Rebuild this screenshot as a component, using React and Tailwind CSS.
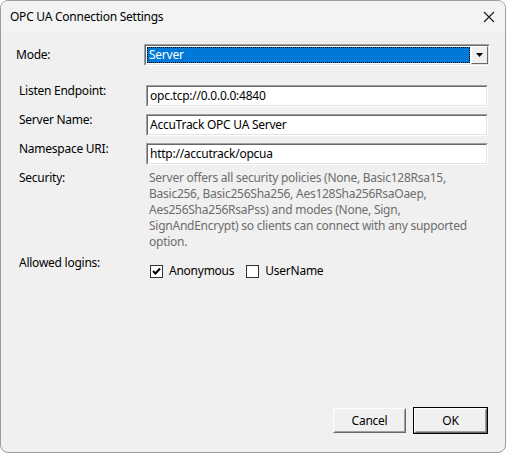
import React from 'react';

const Field = ({ value }) => (
  <div className="flex-1 h-[22px] border border-t-[#a0a0a0] border-l-[#a0a0a0] border-b-white border-r-white">
    <div className="h-full border border-t-[#696969] border-l-[#696969] border-b-[#e3e3e3] border-r-[#e3e3e3] bg-white px-[2px] flex items-center text-black">
      {value}
    </div>
  </div>
);

const Check = ({ checked, label }) => (
  <label className="flex items-center">
    <span className="w-[13px] h-[13px] border border-[#333333] bg-white flex items-center justify-center">
      {checked && (
        <svg width="9" height="9" viewBox="0 0 9 9">
          <polyline points="1,4 3.5,6.5 8,1.5" fill="none" stroke="#000" strokeWidth="2" />
        </svg>
      )}
    </span>
    <span className="ml-[6px]">{label}</span>
  </label>
);

const WinButton = ({ children, isDefault }) => (
  <div className={`w-[75px] h-[27px] ${isDefault ? 'border border-black' : 'border border-transparent'}`}>
    <div className="h-full border border-t-white border-l-white border-b-[#696969] border-r-[#696969] bg-[#f0f0f0]">
      <div className="h-full flex items-center justify-center border border-t-[#f0f0f0] border-l-[#f0f0f0] border-b-[#a0a0a0] border-r-[#a0a0a0]">
        {children}
      </div>
    </div>
  </div>
);

export default function App() {
  return (
    <div className="w-[506px] h-[453px] bg-[#f0f0f0] border border-[#9c9c9c] rounded-[8px] overflow-hidden flex flex-col text-[12px] leading-[16px] tracking-[-0.25px] text-black font-['Noto_Sans',sans-serif]">
      {/* Title bar */}
      <div className="h-[31px] shrink-0 bg-[#f3f3f3] flex items-center justify-between pl-[9px] pr-[10px]">
        <span>OPC UA Connection Settings</span>
        <svg width="12" height="12" viewBox="0 0 12 12">
          <path d="M1 1 L11 11 M11 1 L1 11" stroke="#1a1a1a" strokeWidth="1.1" />
        </svg>
      </div>

      <div className="flex-1 flex flex-col pl-[18px] pr-[17px] pt-[12px] pb-[18px]">
        {/* Mode */}
        <div className="flex items-center h-[22px]">
          <span className="w-[127px] -ml-[3px]">Mode:</span>
          <div className="flex-1 -mr-[2px] ml-[1px] h-[22px] border border-t-[#a0a0a0] border-l-[#a0a0a0] border-b-white border-r-white">
            <div className="h-full flex border border-t-[#696969] border-l-[#696969] border-b-[#e3e3e3] border-r-[#e3e3e3] bg-white">
              <div className="flex-1 m-[1px] bg-[#0078d7] border border-dotted border-[#000] text-white flex items-center pl-[1px]">
                Server
              </div>
              <div className="w-[17px] h-full border border-t-white border-l-white border-b-[#696969] border-r-[#696969] bg-[#f0f0f0] flex items-center justify-center">
                <svg width="7" height="4" viewBox="0 0 7 4">
                  <polygon points="0,0 7,0 3.5,4" fill="#000" />
                </svg>
              </div>
            </div>
          </div>
        </div>

        {/* Text fields */}
        <div className="flex flex-col gap-[7px] mt-[19px]">
          {[
            ['Listen Endpoint:', 'opc.tcp://0.0.0.0:4840'],
            ['Server Name:', 'AccuTrack OPC UA Server'],
            ['Namespace URI:', 'http://accutrack/opcua'],
          ].map(([label, value]) => (
            <div key={label} className="flex items-start">
              <span className="w-[127px] -mt-[2px]">{label}</span>
              <Field value={value} />
            </div>
          ))}
        </div>

        {/* Security */}
        <div className="flex items-start mt-[5px]">
          <span className="w-[127px]">Security:</span>
          <p className="pl-[3px] text-[#6d6d6d] whitespace-nowrap">
            Server offers all security policies (None, Basic128Rsa15,<br />
            Basic256, Basic256Sha256, Aes128Sha256RsaOaep,<br />
            Aes256Sha256RsaPss) and modes (None, Sign,<br />
            SignAndEncrypt) so clients can connect with any supported<br />
            option.
          </p>
        </div>

        {/* Allowed logins */}
        <div className="flex items-start mt-[5px]">
          <span className="w-[127px]">Allowed logins:</span>
          <div className="flex items-center gap-[12px] pl-[4px] mt-[8px]">
            <Check checked label="Anonymous" />
            <Check label="UserName" />
          </div>
        </div>

        <div className="flex-1" />

        {/* Buttons */}
        <div className="flex justify-end gap-[6px]">
          <WinButton>Cancel</WinButton>
          <WinButton isDefault>OK</WinButton>
        </div>
      </div>
    </div>
  );
}
